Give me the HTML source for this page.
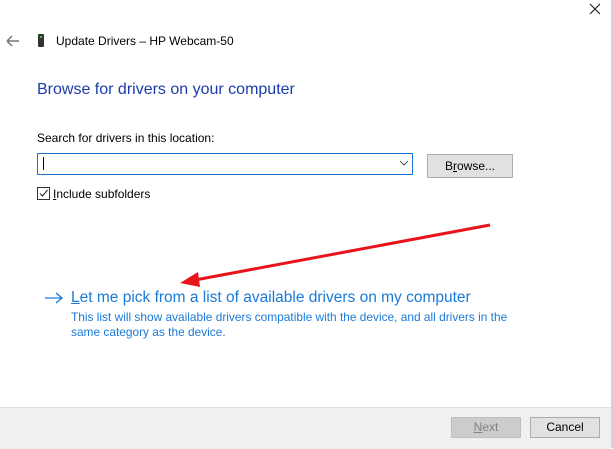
<!DOCTYPE html>
<html><head><style>
body{margin:0;width:613px;height:448px;background:#fff;position:relative;overflow:hidden;font-family:"Liberation Sans",sans-serif;font-size:12px;color:#000}
.a{position:absolute;white-space:nowrap}
</style></head><body>
<div class="a" style="left:611px;top:0;width:2px;height:448px;background:#d4d4d4"></div>
<svg class="a" style="left:588px;top:2px" width="14" height="14"><path d="M2 2L12 12M12 2L2 12" stroke="#111" stroke-width="1"/></svg>
<svg class="a" style="left:6px;top:35px" width="14" height="12"><path d="M1 6H13M1 6L6 1M1 6L6 11" stroke="#777" stroke-width="1.5" fill="none"/></svg>
<div class="a" style="left:38px;top:34px;width:6px;height:13px;background:#333;border-radius:1px"></div>
<div class="a" style="left:40px;top:36px;width:2px;height:2px;background:#3c3"></div>
<div class="a" style="left:56px;top:34px;font-size:12px">Update Drivers – HP Webcam-50</div>
<div class="a" style="left:37px;top:81px;font-size:16px;color:#1a3caa">Browse for drivers on your computer</div>
<div class="a" style="left:37px;top:131px">Search for drivers in this location:</div>
<div class="a" style="left:37px;top:153px;width:376px;height:22px;border:1px solid #1a73d0;box-sizing:border-box"></div>
<div class="a" style="left:43px;top:157px;width:1px;height:13px;background:#000"></div>
<svg class="a" style="left:399px;top:160px" width="10" height="6"><path d="M1 1L5 5L9 1" stroke="#555" fill="none"/></svg>
<div class="a" style="left:427px;top:154px;width:86px;height:24px;background:#e1e1e1;border:1px solid #adadad;box-sizing:border-box;text-align:center;line-height:22px">B<u>r</u>owse...</div>
<div class="a" style="left:37px;top:187px;width:13px;height:13px;border:1px solid #333;box-sizing:border-box"></div>
<svg class="a" style="left:37px;top:187px" width="13" height="13"><path d="M3 6.5L5.5 9L10.5 3" stroke="#333" stroke-width="1.2" fill="none"/></svg>
<div class="a" style="left:53px;top:187px"><u>I</u>nclude subfolders</div>
<svg class="a" style="left:0;top:0" width="613" height="448"><path d="M490 225L195 280" stroke="#e8141c" stroke-width="3"/><path d="M180 283L198 272L200 287Z" fill="#e8141c"/></svg>
<svg class="a" style="left:44px;top:292px" width="20" height="12"><path d="M1 6H18M12 1L18 6L12 11" stroke="#1a7ad8" stroke-width="1.3" fill="none"/></svg>
<div class="a" style="left:71px;top:289px;font-size:15.5px;color:#1a7ad8"><u>L</u>et me pick from a list of available drivers on my computer</div>
<div class="a" style="left:71px;top:310px;font-size:11.9px;color:#1a7ad8;line-height:15px">This list will show available drivers compatible with the device, and all drivers in the<br>same category as the device.</div>
<div class="a" style="left:0;top:407px;width:611px;height:41px;background:#f0f0f0;border-top:1px solid #dfdfdf"></div>
<div class="a" style="left:451px;top:417px;width:70px;height:21px;background:#ccc;border:1px solid #bfbfbf;box-sizing:border-box;text-align:center;line-height:19px;color:#838383"><u>N</u>ext</div>
<div class="a" style="left:530px;top:417px;width:70px;height:21px;background:#e1e1e1;border:1px solid #adadad;box-sizing:border-box;text-align:center;line-height:19px">Cancel</div>
</body></html>
